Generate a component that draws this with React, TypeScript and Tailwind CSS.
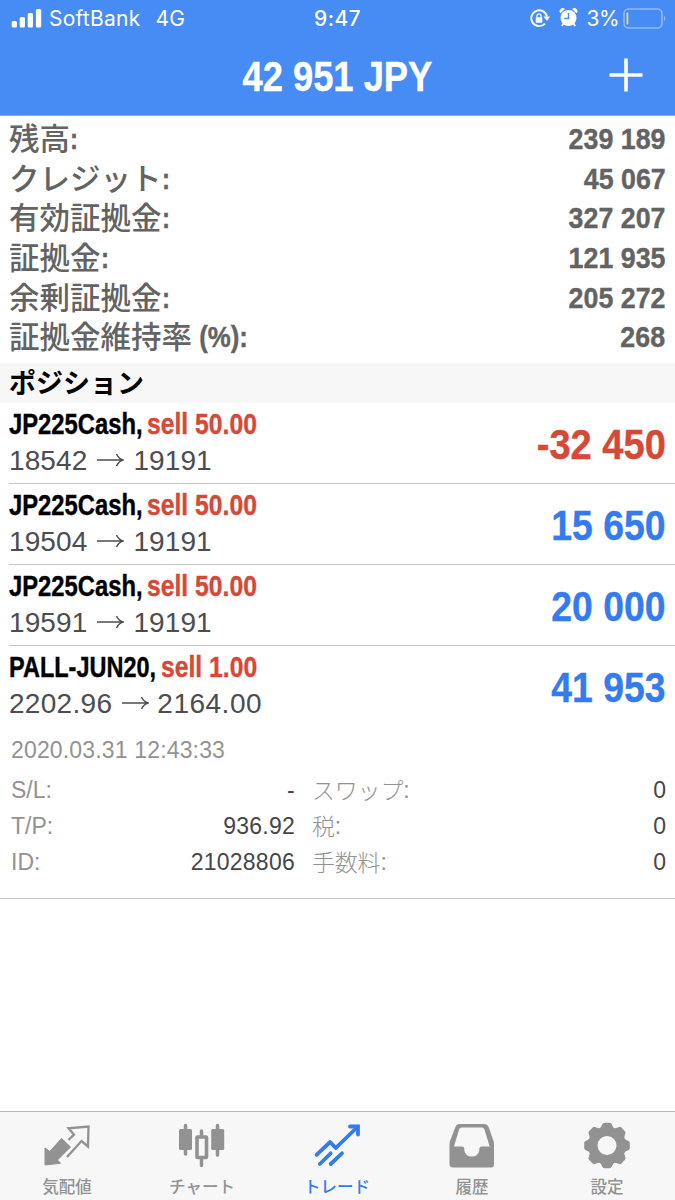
import React from "react";

const bold = "font-['Liberation_Sans','Noto_Sans_CJK_JP',sans-serif] font-bold [-webkit-text-stroke:0.4px]";
const sans = "font-['Liberation_Sans','Noto_Sans_CJK_JP',sans-serif]";
const status = "font-['Inter','Liberation_Sans',sans-serif]";

function StatusBar() {
  return (
    <div className={`grid h-[38px] grid-cols-[1fr_auto_1fr] items-center pl-[11px] pr-[9px] text-[21px] leading-[38px] ${status}`}>
      <div className="flex items-center">
        <svg width="31" height="20" viewBox="0 0 31 20" fill="currentColor">
          <rect x="0.7" y="12" width="5.3" height="6.5" rx="1.5" />
          <rect x="8.7" y="8" width="5.3" height="10.5" rx="1.5" />
          <rect x="16.7" y="4" width="5.3" height="14.5" rx="1.5" />
          <rect x="24.9" y="0" width="5.3" height="18.5" rx="1.5" />
        </svg>
        <span className="ml-[7px] tracking-[0.25px]">SoftBank</span>
        <span className="ml-[15px] tracking-[0.2px]">4G</span>
      </div>
      <span className="pr-[2px] font-medium tracking-[0.4px]">9:47</span>
      <div className="flex items-center justify-end">
        <svg width="20" height="20" viewBox="0 0 20 20" fill="none" stroke="currentColor">
          <path d="M15 14.600A7.900 7.900 0 1 1 16.900 7.500" strokeWidth="1.9" />
          <path d="M13.500 7.500H20L17 12Z" fill="currentColor" stroke="none" />
          <rect x="5.700" y="8.300" width="6.600" height="5.400" rx="0.6" fill="currentColor" stroke="none" />
          <path d="M7 8.600V6.800a2 2 0 0 1 4 0V8.600" strokeWidth="1.2" />
        </svg>
        <svg className="mb-[2px] ml-[9px]" width="19" height="20" viewBox="0 0 19 20">
          <circle cx="9.5" cy="10" r="8" fill="currentColor" />
          <path d="M1.500 5.300A3 3 0 0 1 6 1.100ZM17.500 5.300A3 3 0 0 0 13 1.100Z" fill="currentColor" />
          <path d="M4.500 15.500L2.800 18.100M14.500 15.500l1.700 2.600" stroke="currentColor" strokeWidth="1.8" />
          <path d="M9.500 5V10.500H5.200" fill="none" stroke="#478bf5" strokeWidth="1.4" />
        </svg>
        <span className="ml-[8px] tracking-[-0.5px]">3%</span>
        <svg className="mb-[2px] ml-[4px]" width="43" height="21" viewBox="0 0 43 21" fill="none">
          <rect x="1" y="1" width="38" height="19" rx="4.500" stroke="#91bafa" strokeWidth="1.6" />
          <rect x="3.500" y="4.500" width="1.800" height="12" rx="0.8" fill="#e8d68a" />
          <path d="M41 7.500q2.600 3 0 6z" fill="#91bafa" />
        </svg>
      </div>
    </div>
  );
}

function Header() {
  return (
    <header className="h-[116px] border-b border-[#8aa9e8] bg-[#478bf5] text-white">
      <StatusBar />
      <div className="grid h-[77px] grid-cols-[1fr_auto_1fr] items-center pr-[32px]">
        <span />
        <h1 className={`ml-[32px] scale-x-[.845] text-[43px] leading-[77px] ${bold}`}>42 951 JPY</h1>
        <svg className="mb-[4px] justify-self-end" width="34" height="34" viewBox="0 0 34 34" stroke="currentColor" strokeWidth="3.6">
          <path d="M0.5 17H33.5M17 0.5V33.5" />
        </svg>
      </div>
    </header>
  );
}

const summary: { label: string; suffix: string; value: string }[] = [
  { label: "残高", suffix: ":", value: "239 189" },
  { label: "クレジット", suffix: ":", value: "45 067" },
  { label: "有効証拠金", suffix: ":", value: "327 207" },
  { label: "証拠金", suffix: ":", value: "121 935" },
  { label: "余剰証拠金", suffix: ":", value: "205 272" },
  { label: "証拠金維持率", suffix: " (%):", value: "268" },
];

function Summary() {
  return (
    <section className="h-[247px] pt-[2.5px] pr-[9.5px] pl-[9px] text-[30px] text-[#636363]">
      {summary.map(({ label, suffix, value }) => (
        <div key={label} className="flex h-[39.7px] items-center justify-between leading-[39px]">
          <span className="flex items-center">
            <span className="-mt-[2px] font-['Noto_Sans_CJK_JP',sans-serif] text-[30.5px] font-medium">{label}</span>
            <span className={`inline-block origin-left whitespace-pre ${suffix.length > 1 ? "scale-x-[.86]" : "scale-x-[.8]"} ${bold}`}>{suffix}</span>
          </span>
          <span className={`inline-block origin-right scale-x-[.893] ${bold}`}>{value}</span>
        </div>
      ))}
    </section>
  );
}

function Arrow() {
  return (
    <svg className="mx-[10px] mb-[1px]" width="27" height="14" viewBox="0 0 27 14" fill="none" stroke="currentColor" strokeWidth="1.5">
      <path d="M0 7H25.5M19.5 1Q21.5 5.5 26 7Q21.5 8.500 19.500 13" />
    </svg>
  );
}

interface Position {
  symbol: string;
  side: string;
  from: string;
  to: string;
  profit: string;
}

const positions: Position[] = [
  { symbol: "JP225Cash,", side: "sell 50.00", from: "18542", to: "19191", profit: "-32 450" },
  { symbol: "JP225Cash,", side: "sell 50.00", from: "19504", to: "19191", profit: "15 650" },
  { symbol: "JP225Cash,", side: "sell 50.00", from: "19591", to: "19191", profit: "20 000" },
  { symbol: "PALL-JUN20,", side: "sell 1.00", from: "2202.96", to: "2164.00", profit: "41 953" },
];

function PositionRow({ p, last }: { p: Position; last: boolean }) {
  return (
    <div className={`ml-[9px] flex h-[81px] items-center justify-between pr-[9.5px] ${last ? "" : "border-b border-[#c4c5c8]"}`}>
      <div className="flex flex-col pb-[2px]">
        <div className={`flex text-[29px] leading-[36px] ${bold}`}>
          <span className={`origin-left text-black ${last ? "w-[152px] scale-x-[.81]" : "w-[138px] scale-x-[.82]"}`}>{p.symbol}</span>
          <span className="origin-left scale-x-[.852] text-[#d64937]">{p.side}</span>
        </div>
        <div className={`flex items-center text-[28px] leading-[37px] text-[#4c4d50] ${sans}`}>
          <span className={last ? "tracking-[0.3px]" : "tracking-[0.1px]"}>{p.from}</span>
          <Arrow />
          <span className={last ? "-ml-[2px] tracking-[0.5px]" : "-ml-[1px] tracking-[0.1px]"}>{p.to}</span>
        </div>
      </div>
      <span
        className={`origin-right pt-[1px] text-[43px] leading-[78px] ${bold} ${p.profit.startsWith("-") ? "scale-x-[.885] text-[#d64937]" : "scale-x-[.868] text-[#347bf0]"}`}
      >
        {p.profit}
      </span>
    </div>
  );
}

const details = [
  ["S/L:", "-", "スワップ:", "0"],
  ["T/P:", "936.92", "税:", "0"],
  ["ID:", "21028806", "手数料:", "0"],
];

function Details() {
  return (
    <div className={`h-[172px] border-b border-[#c4c5c8] pt-[5px] pr-[9px] pl-[11px] text-[23px] ${sans}`}>
      <div className="h-[40px] leading-[36px] tracking-[0.16px] text-[#929292]">2020.03.31 12:43:33</div>
      {details.map(([a, b, c, d]) => (
        <div key={a} className="flex h-[36px] items-center leading-[36px] text-[#929292]">
          <span className="flex w-[284px] justify-between">
            <span>{a}</span>
            <span className="tracking-[0.25px] text-[#454649]">{b}</span>
          </span>
          <span className="ml-[17px] flex flex-1 items-center justify-between">
            <span className="flex h-[36px] items-center tracking-[-0.2px]">
              <span className="-mt-[3px] font-['Noto_Sans_CJK_JP',sans-serif] font-light">{c.slice(0, -1)}</span>
              <span>:</span>
            </span>
            <span className="text-[#454649]">{d}</span>
          </span>
        </div>
      ))}
    </div>
  );
}

function QuotesIcon() {
  return (
    <svg width="48" height="48" viewBox="0 0 48 48" fill="none">
      <path d="M2 26L6.800 29.500L18.500 16.500L27.500 25L14.500 38L17.500 41.300L2 43Z" fill="#929292" stroke="#929292" strokeLinejoin="round" />
      <path d="M25.500 18L31 12.700L25.500 6.300L45.500 4.500L45 24.500L38.500 19L24 35" stroke="#929292" strokeWidth="2.300" />
    </svg>
  );
}

function ChartIcon() {
  return (
    <svg width="48" height="48" viewBox="0 0 48 48" fill="#929292">
      <rect x="1" y="7" width="13" height="21" rx="1.500" />
      <path d="M7.500 3.500V32M39.500 3.500V33M23.500 9V14M23.500 36V43.500" stroke="#929292" strokeWidth="3.500" strokeLinecap="round" />
      <rect x="33.200" y="7" width="13" height="21" rx="1.500" />
      <rect x="19" y="15" width="9.500" height="20.500" rx="0.500" fill="none" stroke="#929292" strokeWidth="3.600" />
    </svg>
  );
}

function TradeIcon() {
  return (
    <svg width="48" height="48" viewBox="0 0 48 48" fill="none" stroke="#347bf0" strokeWidth="3.800" strokeLinecap="round">
      <path d="M3.500 32.800L17.200 20L22.700 26L44.500 5" strokeLinejoin="round" />
      <path d="M37 4.500H45V12.500" />
      <path d="M6.800 42L17.700 31.300M17.700 42L29 31.300" />
    </svg>
  );
}

function HistoryIcon() {
  return (
    <svg width="48" height="48" viewBox="0 0 48 48">
      <path
        d="M11 2H36.500Q39.500 2 40.500 4.700L45.500 19Q46 20.500 46 22V42Q46 45.500 43 45.500H5Q1.500 45.500 1.500 42V22Q1.500 20.500 2 19L7.500 4.700Q8.500 2 11 2ZM13.500 5.500Q11.800 5.500 11.200 7L6 24.500H14Q16 24.500 16.300 26.500V28.500Q17.500 34.500 23.800 34.500T31.300 28.500V26.500Q31.500 24.500 33.500 24.500H41.700L36.300 7Q35.700 5.500 34 5.500Z"
        fill="#929292"
        fillRule="evenodd"
      />
    </svg>
  );
}

function SettingsIcon() {
  return (
    <svg width="48" height="48" viewBox="-24 -23.5 48 48" fill="#929292">
      <circle r="14" fill="none" stroke="#929292" strokeWidth="9" />
      {[0, 45, 90, 135, 180, 225, 270, 315].map((a) => (
        <path key={a} transform={`rotate(${a})`} d="M-8 -16.500Q-5.500 -18.500 -4.800 -21Q-4.300 -22.800 -2.500 -22.800H2.500Q4.300 -22.800 4.800 -21Q5.500 -18.500 8 -16.500L5 -12H-5Z" />
      ))}
    </svg>
  );
}

const tabs = [
  { label: "気配値", Icon: QuotesIcon },
  { label: "チャート", Icon: ChartIcon },
  { label: "トレード", Icon: TradeIcon, active: true },
  { label: "履歴", Icon: HistoryIcon },
  { label: "設定", Icon: SettingsIcon },
];

function TabBar() {
  return (
    <nav className="mt-auto grid h-[89px] grid-cols-5 border-t border-[#b6b7b9] bg-[#f7f7f7]">
      {tabs.map(({ label, Icon, active }) => (
        <div key={label} className={`flex flex-col items-center pt-[10px] pr-[1px] ${active ? "text-[#347bf0]" : "text-[#929292]"}`}>
          <Icon />
          <span className="mt-[5px] font-['Noto_Sans_CJK_JP',sans-serif] text-[16.5px] leading-[22px] font-medium">{label}</span>
        </div>
      ))}
    </nav>
  );
}

export default function App() {
  return (
    <div className="flex h-[1200px] w-[675px] flex-col overflow-hidden bg-white whitespace-nowrap">
      <Header />
      <Summary />
      <div className="h-[40px] bg-[#f7f7f7] pl-[9px] font-['Noto_Sans_CJK_JP',sans-serif] text-[27px] leading-[38px] font-bold text-black">
        ポジション
      </div>
      {positions.map((p, i) => (
        <PositionRow key={i} p={p} last={i === positions.length - 1} />
      ))}
      <Details />
      <TabBar />
    </div>
  );
}
